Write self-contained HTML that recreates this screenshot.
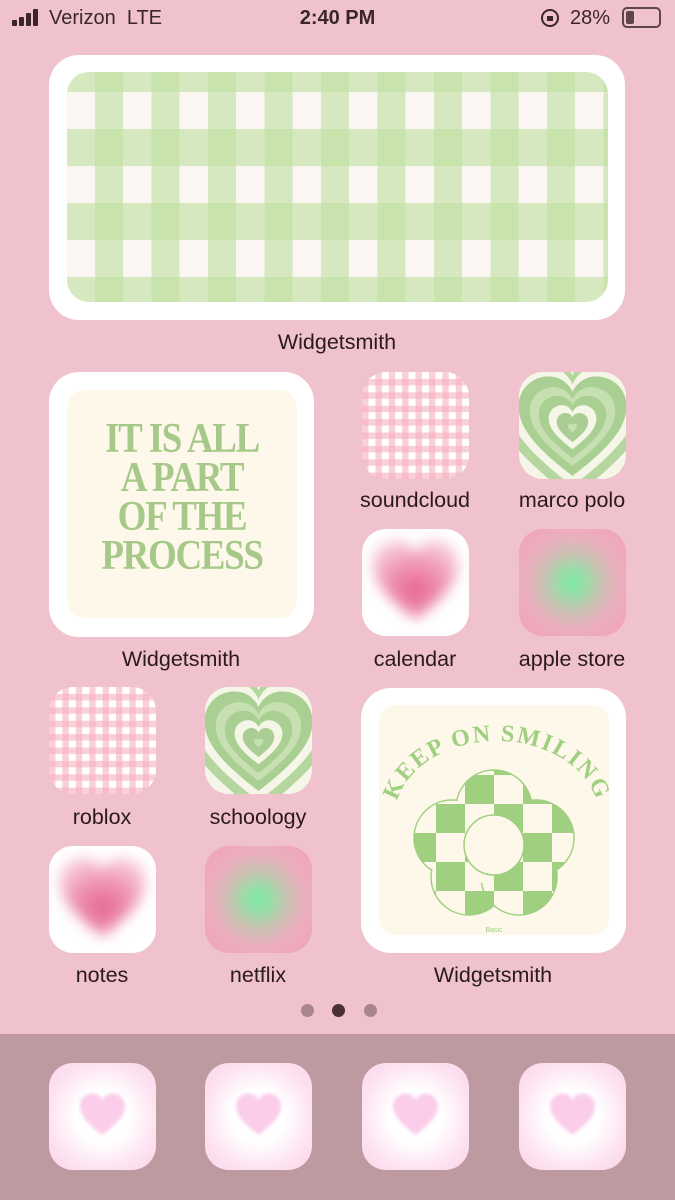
<!DOCTYPE html>
<html><head><meta charset="utf-8"><style>
*{margin:0;padding:0;box-sizing:border-box}
body{width:675px;height:1200px;background:#efc2cd;position:relative;overflow:hidden;font-family:"Liberation Sans",sans-serif;color:#2a1a1f}
.a{position:absolute}
.lbl{position:absolute;font-size:21.5px;text-align:center;width:180px}
.ic{position:absolute;width:107px;height:107px;border-radius:24px;overflow:hidden}
.pg{background-color:#fff;background-image:linear-gradient(90deg,rgba(247,176,190,.6) 50%,transparent 50%),linear-gradient(0deg,rgba(247,176,190,.6) 50%,transparent 50%);background-size:13.4px 13.4px}
.aura{background:radial-gradient(circle at 50% 50%,#7de9a3 0%,#9cdcaa 18%,#c9c2b2 38%,#eab0be 60%,#f0a6ba 85%,#e99cb1 100%)}
.bh{background:#fff}
.dock{background:radial-gradient(ellipse at 50% 50%,#fff 35%,#fde3f1 70%,#fbd3ea 100%)}
.wid{position:absolute;background:#fff;border-radius:30px}
</style></head><body>
<svg width="0" height="0" style="position:absolute"><defs>
<path id="hp" d="M0 40 C-30 17 -45 0 -45 -18 C-45 -33 -33 -43 -20 -43 C-10 -43 -3 -37 0 -30 C3 -37 10 -43 20 -43 C33 -43 45 -33 45 -18 C45 0 30 17 0 40Z"/>
<filter id="b1" x="-50%" y="-50%" width="200%" height="200%"><feGaussianBlur stdDeviation="7"/></filter>
<filter id="b3" x="-50%" y="-50%" width="200%" height="200%"><feGaussianBlur stdDeviation="3"/></filter>
<radialGradient id="rg1" cx="50%" cy="62%" r="60%"><stop offset="0" stop-color="#e5658f"/><stop offset="0.6" stop-color="#f09ab5"/><stop offset="1" stop-color="#f8c6d5"/></radialGradient>
<g id="gh">
<rect width="107" height="107" fill="#f6f6e8"/>
<g transform="translate(53.5,56)">
<use href="#hp" fill="#b5d69e" transform="scale(1.75)"/>
<use href="#hp" fill="#f6f6e8" transform="scale(1.45)"/>
<use href="#hp" fill="#aacf93" transform="scale(1.2)"/>
<use href="#hp" fill="#c6e0b1" transform="scale(0.95)"/>
<use href="#hp" fill="#aacf93" transform="scale(0.75)"/>
<use href="#hp" fill="#f6f6e8" transform="scale(0.53)"/>
<use href="#hp" fill="#a9cd92" transform="scale(0.35)"/>
<use href="#hp" fill="#c6e0b1" transform="scale(0.1)"/>
</g></g>
</defs></svg>
<!-- status bar -->
<div class="a" style="left:12px;top:8px;width:30px;height:20px">
<div class="a" style="left:0;top:12px;width:5px;height:6px;background:#3a262b;border-radius:1px"></div>
<div class="a" style="left:7px;top:9px;width:5px;height:9px;background:#3a262b;border-radius:1px"></div>
<div class="a" style="left:14px;top:5px;width:5px;height:13px;background:#3a262b;border-radius:1px"></div>
<div class="a" style="left:21px;top:1px;width:5px;height:17px;background:#3a262b;border-radius:1px"></div>
</div>
<div class="a" style="left:49px;top:7px;font-size:20px;color:#3a262b">Verizon&nbsp;&nbsp;LTE</div>
<div class="a" style="left:0;width:675px;text-align:center;top:7px;font-size:20px;font-weight:bold;color:#3a262b">2:40 PM</div>
<div class="a" style="left:541px;top:9px;width:18px;height:18px;border:2px solid #3a262b;border-radius:50%"><div class="a" style="left:4px;top:5px;width:6px;height:5px;background:#3a262b"></div></div>
<div class="a" style="left:570px;top:7px;font-size:20px;color:#3a262b">28%</div>
<div class="a" style="left:622px;top:7px;width:39px;height:21px;border:2px solid #3a262b;border-radius:5px;opacity:.8"><div class="a" style="left:2px;top:2px;width:8px;height:13px;background:#3a262b;border-radius:2px"></div></div>

<!-- top widget -->
<div class="wid" style="left:49px;top:55px;width:576px;height:265px"></div>
<div class="a" style="left:67px;top:72px;width:541px;height:230px;border-radius:22px;background-color:#fbf6f2;background-image:linear-gradient(90deg,rgba(190,224,158,.6) 50%,transparent 50%),linear-gradient(0deg,rgba(190,224,158,.6) 50%,transparent 50%);background-size:56.5px 74px;background-position:28px 20px"></div>
<div class="lbl" style="left:247px;top:330px">Widgetsmith</div>

<!-- left widget -->
<div class="wid" style="left:49px;top:372px;width:265px;height:265px"></div>
<div class="a" style="left:67px;top:390px;width:230px;height:228px;border-radius:18px;background:#fdf8ea"></div>
<div class="a" style="left:72px;top:420px;width:220px;text-align:center;font-family:'Liberation Serif',serif;font-weight:bold;font-size:42px;line-height:39px;color:#a6c98a;letter-spacing:-1.5px;transform:scaleX(.88)">IT IS ALL<br>A PART<br>OF THE<br>PROCESS</div>
<div class="lbl" style="left:91px;top:647px">Widgetsmith</div>

<!-- soundcloud -->
<div class="ic pg" style="left:362px;top:372px"></div>
<div class="lbl" style="left:325px;top:488px">soundcloud</div>
<!-- marco polo -->
<div class="ic" style="left:519px;top:372px"><svg width="107" height="107" viewBox="0 0 107 107"><use href="#gh"/></svg></div>
<div class="lbl" style="left:482px;top:488px">marco polo</div>
<!-- calendar -->
<div class="ic bh" style="left:362px;top:529px">
<svg width="107" height="107" viewBox="0 0 107 107"><use href="#hp" filter="url(#b1)" fill="url(#rg1)" transform="translate(53.5,53) scale(0.95)"/></svg></div>
<div class="lbl" style="left:325px;top:647px">calendar</div>
<!-- apple store -->
<div class="ic aura" style="left:519px;top:529px"></div>
<div class="lbl" style="left:482px;top:647px">apple store</div>

<!-- roblox -->
<div class="ic pg" style="left:49px;top:687px"></div>
<div class="lbl" style="left:12px;top:805px">roblox</div>
<!-- schoology -->
<div class="ic" style="left:205px;top:687px"><svg width="107" height="107" viewBox="0 0 107 107"><use href="#gh"/></svg></div>
<div class="lbl" style="left:168px;top:805px">schoology</div>
<!-- notes -->
<div class="ic bh" style="left:49px;top:846px">
<svg width="107" height="107" viewBox="0 0 107 107"><use href="#hp" filter="url(#b1)" fill="url(#rg1)" transform="translate(53.5,53) scale(0.95)"/></svg></div>
<div class="lbl" style="left:12px;top:963px">notes</div>
<!-- netflix -->
<div class="ic aura" style="left:205px;top:846px"></div>
<div class="lbl" style="left:168px;top:963px">netflix</div>

<!-- right widget -->
<div class="wid" style="left:361px;top:688px;width:265px;height:265px"></div>
<div class="a" style="left:379px;top:705px;width:230px;height:230px;border-radius:16px;background:#fdf8ea">
<svg width="230" height="230" viewBox="0 0 230 230">
<defs>
<path id="arc" d="M16 112 A102 76 0 0 1 220 112"/>
<pattern id="chk" x="0" y="0" width="58" height="58" patternUnits="userSpaceOnUse" patternTransform="translate(28,70)"><rect width="58" height="58" fill="#fdf8ea"/><rect width="29" height="29" fill="#9fd07f"/><rect x="29" y="29" width="29" height="29" fill="#9fd07f"/></pattern>
</defs>
<text font-family="Liberation Serif,serif" font-weight="bold" font-size="24" fill="#9fd07f" letter-spacing="2"><textPath href="#arc" startOffset="50%" text-anchor="middle">KEEP ON SMILING</textPath></text>
<g fill="url(#chk)" stroke="#9fd07f" stroke-width="1.5">
<circle cx="115" cy="103" r="38"/>
<circle cx="73" cy="133" r="38"/>
<circle cx="157" cy="133" r="38"/>
<circle cx="90" cy="172" r="38"/>
<circle cx="140" cy="172" r="38"/>
</g>
<g fill="url(#chk)">
<circle cx="115" cy="103" r="37"/>
<circle cx="73" cy="133" r="37"/>
<circle cx="157" cy="133" r="37"/>
<circle cx="115" cy="140" r="40"/>
</g>
<circle cx="115" cy="140" r="30" fill="#fdf8ea" stroke="#9fd07f" stroke-width="1.5"/>
<text x="115" y="227" font-size="7" fill="#9fd07f" text-anchor="middle">Basic</text>
</svg></div>
<div class="lbl" style="left:403px;top:963px">Widgetsmith</div>

<!-- dots -->
<div class="a" style="left:301px;top:1004px;width:13px;height:13px;border-radius:50%;background:#a9858c"></div>
<div class="a" style="left:332px;top:1004px;width:13px;height:13px;border-radius:50%;background:#4a2f35"></div>
<div class="a" style="left:364px;top:1004px;width:13px;height:13px;border-radius:50%;background:#a9858c"></div>

<!-- dock -->
<div class="a" style="left:0;top:1034px;width:675px;height:166px;background:#bd99a0"></div>
<div class="ic dock" style="left:49px;top:1063px"><svg width="107" height="107" viewBox="0 0 107 107"><use href="#hp" filter="url(#b3)" fill="#fbcdea" transform="translate(53.5,52) scale(0.5)"/></svg></div>
<div class="ic dock" style="left:205px;top:1063px"><svg width="107" height="107" viewBox="0 0 107 107"><use href="#hp" filter="url(#b3)" fill="#fbcdea" transform="translate(53.5,52) scale(0.5)"/></svg></div>
<div class="ic dock" style="left:362px;top:1063px"><svg width="107" height="107" viewBox="0 0 107 107"><use href="#hp" filter="url(#b3)" fill="#fbcdea" transform="translate(53.5,52) scale(0.5)"/></svg></div>
<div class="ic dock" style="left:519px;top:1063px"><svg width="107" height="107" viewBox="0 0 107 107"><use href="#hp" filter="url(#b3)" fill="#fbcdea" transform="translate(53.5,52) scale(0.5)"/></svg></div>
</body></html>
